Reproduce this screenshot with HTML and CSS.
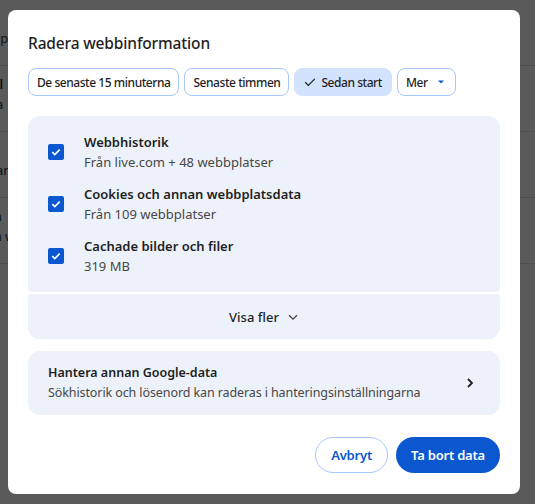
FILE: index.html
```html
<!DOCTYPE html>
<html lang="sv">
<head>
    <meta charset="UTF-8">
    <meta name="viewport" content="width=device-width, initial-scale=1.0">
    <title>Radera webbinformation</title>
    <link rel="stylesheet" href="styles.css">
</head>
<body>
    <!-- sidan bakom dialogen, nedtonad -->
    <div class="page">
        <div class="page-row"><span>Hämtningar</span><span>Cookies och webbplatsdata</span></div>
        <div class="page-row"><span>Säkerhetskontroll</span><span>Lösenord och data</span></div>
        <div class="page-row"><span>Sökmotor</span><span>Standardwebbläsare</span></div>
        <div class="page-row"><span>Webbinformation</span><span>Rensa historik och webbdata</span><span>Radera data</span></div>
    </div>
    <div class="scrim"></div>

    <div class="dialog">
        <h1 class="title">Radera webbinformation</h1>

        <div class="chips">
            <button class="chip">De senaste 15 minuterna</button>
            <button class="chip">Senaste timmen</button>
            <button class="chip selected">
                <svg width="14" height="14" viewBox="0 0 16 16"><path d="M2.5 8.3l3.6 3.6 7.4-7.4" fill="none" stroke="#1f1f1f" stroke-width="1.4"/></svg>
                Sedan start
            </button>
            <button class="chip">
                Mer
                <svg class="caret" width="10" height="10" viewBox="0 0 10 10"><path d="M2 3.5h6L5 6.5z" fill="#0b57d0"/></svg>
            </button>
        </div>

        <div class="data-list">
            <label class="data-item">
                <span class="check"><svg width="16" height="16" viewBox="0 0 16 16"><path d="M4.3 8.2l2.5 2.4 4.9-5" fill="none" stroke="#fff" stroke-width="1.6"/></svg></span>
                <span class="item-text">
                    <span class="item-title">Webbhistorik</span>
                    <span class="item-sub">Från live.com + 48 webbplatser</span>
                </span>
            </label>
            <label class="data-item">
                <span class="check"><svg width="16" height="16" viewBox="0 0 16 16"><path d="M4.3 8.2l2.5 2.4 4.9-5" fill="none" stroke="#fff" stroke-width="1.6"/></svg></span>
                <span class="item-text">
                    <span class="item-title">Cookies och annan webbplatsdata</span>
                    <span class="item-sub">Från 109 webbplatser</span>
                </span>
            </label>
            <label class="data-item">
                <span class="check"><svg width="16" height="16" viewBox="0 0 16 16"><path d="M4.3 8.2l2.5 2.4 4.9-5" fill="none" stroke="#fff" stroke-width="1.6"/></svg></span>
                <span class="item-text">
                    <span class="item-title">Cachade bilder och filer</span>
                    <span class="item-sub">319 MB</span>
                </span>
            </label>
        </div>
        <button class="show-more">
            Visa fler
            <svg width="12" height="12" viewBox="0 0 12 12"><path d="M2 4.2l4 4 4-4" fill="none" stroke="#444" stroke-width="1.3"/></svg>
        </button>

        <div class="google-data">
            <div class="item-text">
                <span class="item-title">Hantera annan Google-data</span>
                <span class="item-sub">Sökhistorik och lösenord kan raderas i hanteringsinställningarna</span>
            </div>
            <svg width="12" height="12" viewBox="0 0 12 12"><path d="M4 2l4 4-4 4" fill="none" stroke="#1f1f1f" stroke-width="1.8"/></svg>
        </div>

        <div class="actions">
            <button class="btn btn-outline">Avbryt</button>
            <button class="btn btn-primary">Ta bort data</button>
        </div>
    </div>
</body>
</html>
```

FILE: styles.css
```css
body {
    margin: 0;
    width: 535px;
    height: 504px;
    overflow: hidden;
    position: relative;
    background: #f4f4f4;
    font-family: "Noto Sans", "Open Sans", sans-serif;
    color: #1f1f1f;
}
.page {
    margin-left: -110px;
}
.page-row {
    height: 57px;
    padding: 8px 0 0;
    border-bottom: 1px solid #d6d6d6;
    display: flex;
    flex-direction: column;
    font-size: 13px;
    line-height: 20px;
    color: #333;
    white-space: nowrap;
}
.page-row span:first-child {
    font-weight: 600;
}
.scrim {
    position: absolute;
    inset: 0;
    background: rgba(0,0,0,0.63);
}
.dialog {
    position: absolute;
    left: 8px;
    top: 10px;
    width: 512px;
    height: 484px;
    box-sizing: border-box;
    padding: 0 20px;
    background: #fff;
    border-radius: 8px;
    display: flex;
    flex-direction: column;
}
.title {
    margin: 21px 0 0;
    font-size: 15.5px;
    font-weight: 500;
    line-height: 24px;
    letter-spacing: -0.15px;
}
.chips {
    display: flex;
    gap: 5px;
    margin-top: 13px;
}
.chip {
    height: 28px;
    padding: 0 8px;
    border: 1px solid #a8c7fa;
    border-radius: 8px;
    background: #fff;
    font-family: inherit;
    font-size: 12px;
    font-weight: 500;
    letter-spacing: -0.45px;
    color: #1f1f1f;
    white-space: nowrap;
    display: flex;
    align-items: center;
    gap: 4px;
}
.chip.selected {
    background: #d3e3fd;
    border-color: #d3e3fd;
    padding: 0 9px 0 8px;
}
.chip .caret {
    margin-left: 4px;
    margin-right: 1px;
}
.data-list {
    margin-top: 20px;
    background: #edf2fa;
    border-radius: 12px 12px 4px 4px;
    padding: 16px 0;
    display: flex;
    flex-direction: column;
    gap: 12px;
}
.data-item {
    display: flex;
    align-items: center;
    padding-left: 20px;
}
.data-item .item-text {
    font-size: 13px;
}
.check {
    width: 16px;
    height: 16px;
    border-radius: 2px;
    background: #0b57d0;
    margin-right: 20px;
    display: flex;
}
.item-text {
    display: flex;
    flex-direction: column;
    font-size: 12.5px;
    line-height: 20px;
    white-space: nowrap;
}
.item-title {
    font-weight: 600;
}
.item-sub {
    color: #474747;
}
.google-data .item-sub {
    letter-spacing: -0.1px;
}
.show-more {
    margin-top: 2px;
    height: 45px;
    border: none;
    background: #edf2fa;
    border-radius: 4px 4px 12px 12px;
    font-family: inherit;
    font-size: 13px;
    font-weight: 500;
    color: #1f1f1f;
    display: flex;
    align-items: center;
    justify-content: center;
    gap: 8px;
}
.google-data {
    margin-top: 12px;
    height: 64px;
    background: #edf2fa;
    border-radius: 12px;
    padding: 0 24px 0 20px;
    display: flex;
    align-items: center;
    justify-content: space-between;
}
.actions {
    margin-top: 22px;
    display: flex;
    justify-content: flex-end;
    gap: 8px;
}
.btn {
    height: 36px;
    border-radius: 18px;
    font-family: inherit;
    font-size: 13px;
    font-weight: 600;
    letter-spacing: -0.2px;
    padding: 0 15px;
}
.btn-outline {
    background: #fff;
    border: 1px solid #a8c7fa;
    color: #0b57d0;
}
.btn-primary {
    background: #0b57d0;
    border: none;
    color: #fff;
}
```
